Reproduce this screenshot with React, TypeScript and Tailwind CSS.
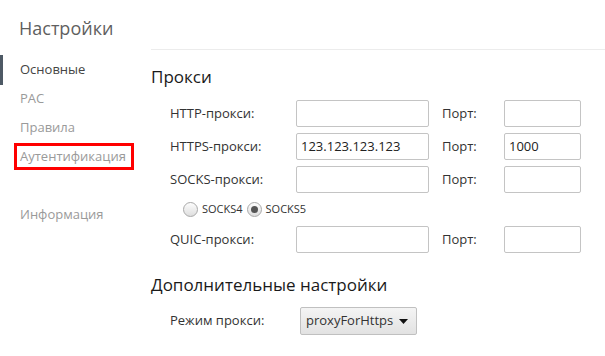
import type { ReactNode } from "react";

const font = { fontFamily: '"Open Sans", "Noto Sans", Arial, sans-serif' };

const navItems = [
  { label: "Основные", active: true },
  { label: "PAC" },
  { label: "Правила" },
  { label: "Аутентификация", marked: true },
  { label: "" },
  { label: "Информация" },
];

function TextBox({ value = "", width }: { value?: string; width: string }) {
  return (
    <div className={`${width} flex h-[27px] items-center rounded-[2px] border border-[#c4c4c4] bg-white px-[4px] text-[13px] text-[#222]`}>
      {value}
    </div>
  );
}

function ProxyRow({ label, host, port }: { label: string; host?: string; port?: string }) {
  return (
    <div className="flex h-[33px] items-center pl-[19px]">
      <span className="w-[126px] text-[13px] text-[#333]">{label}</span>
      <TextBox value={host} width="w-[133px]" />
      <span className="ml-[13px] w-[62px] text-[13px] text-[#333]">Порт:</span>
      <TextBox value={port} width="w-[77px]" />
    </div>
  );
}

function Radio({ checked, children }: { checked?: boolean; children: ReactNode }) {
  return (
    <span className="flex items-center gap-[4px]">
      <span className="flex h-[15px] w-[15px] items-center justify-center rounded-full border border-[#a9a9a9] bg-gradient-to-b from-[#fdfdfd] to-[#dedede]">
        {checked && <span className="h-[7px] w-[7px] rounded-full bg-[#555]" />}
      </span>
      <span className="text-[11px] text-[#333]">{children}</span>
    </span>
  );
}

export default function App() {
  return (
    <div className="flex h-[356px] w-[605px] bg-white" style={font}>
      <aside className="w-[151px] shrink-0">
        <h1 className="pl-[19px] pt-[16px] text-[18px] leading-[24px] text-[#5f5f5f]">Настройки</h1>
        <nav className="mt-[15px]">
          {navItems.map((item, index) => (
            <div className="relative flex h-[29px] items-center pl-[20px]" key={index}>
              {item.active && <span className="absolute left-0 top-0 h-[30px] w-[3px] bg-[#4e5965]" />}
              <span className={`text-[13px] ${item.active ? "text-[#444]" : "text-[#9a9a9a]"}`}>{item.label}</span>
              {item.marked && (
                <span className="absolute left-[14px] top-[1px] h-[27px] w-[120px] border-[3px] border-[#ff0000]" />
              )}
            </div>
          ))}
        </nav>
      </aside>

      <main className="flex-1">
        <div className="mt-[49px] border-t border-[#ececec]" />
        <h2 className="mt-[16px] text-[17px] leading-[22px] text-[#1a1a1a]">Прокси</h2>
        <div className="mt-[9px]">
          <ProxyRow label="HTTP-прокси:" />
          <ProxyRow label="HTTPS-прокси:" host="123.123.123.123" port="1000" />
          <ProxyRow label="SOCKS-прокси:" />
          <div className="flex h-[27px] items-center gap-[4px] pl-[32px]">
            <Radio>SOCKS4</Radio>
            <Radio checked>SOCKS5</Radio>
          </div>
          <ProxyRow label="QUIC-прокси:" />
        </div>

        <h2 className="mt-[18px] text-[17px] leading-[22px] text-[#1a1a1a]">Дополнительные настройки</h2>
        <div className="mt-[11px] flex items-center pl-[19px]">
          <span className="w-[130px] text-[13px] text-[#333]">Режим прокси:</span>
          <div className="flex h-[28px] w-[117px] items-center justify-between rounded-[2px] border border-[#c0c0c0] bg-gradient-to-b from-[#f4f4f4] to-[#e2e2e2] pl-[5px] pr-[8px] text-[13px] text-[#333]">
            <span>proxyForHttps</span>
            <svg width="9" height="5" viewBox="0 0 9 5">
              <path d="M0 0h9L4.5 5z" fill="#111" />
            </svg>
          </div>
        </div>
      </main>
    </div>
  );
}
